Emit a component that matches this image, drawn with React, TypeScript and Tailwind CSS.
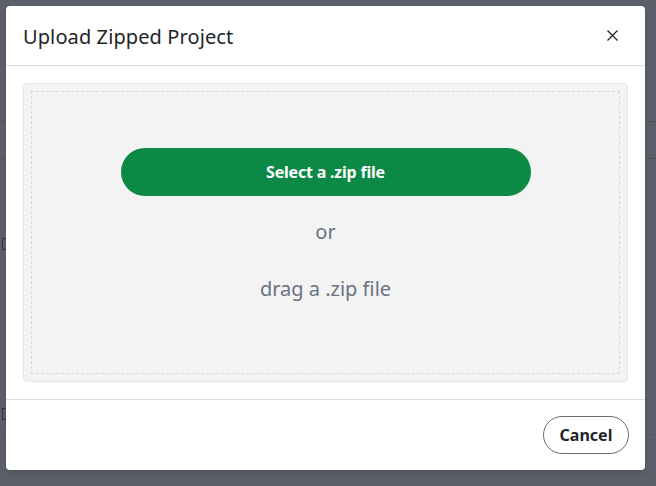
import React from "react";

export default function App() {
  return (
    <div
      className="relative w-[656px] h-[486px] overflow-hidden bg-[#5b5f69]"
      style={{ fontFamily: '"Noto Sans", "Open Sans", sans-serif' }}
    >
      {/* faint underlying page lines */}
      <div className="absolute left-0 top-[121px] w-[656px] h-px bg-[#4f535c]" />
      <div className="absolute left-0 top-[158px] w-[656px] h-px bg-[#4f535c]" />
      <div className="absolute left-0 top-[434px] w-[656px] h-px bg-[#535761]" />
      <div className="absolute left-[2px] top-[238px] w-[4px] h-[12px] border border-r-0 border-[#2f3238]" />
      <div className="absolute left-[2px] top-[408px] w-[4px] h-[12px] border border-r-0 border-[#2f3238]" />

      <div className="absolute left-[6px] top-[6px] w-[639px] h-[464px] bg-white rounded-[4px] flex flex-col shadow-md">
        <div className="h-[60px] flex items-center justify-between pl-[17px] pr-[27px] border-b border-[#dedede] shrink-0">
          <h2 className="text-[20px] text-[#212529] leading-none mt-[2px] tracking-[0.1px]">Upload Zipped Project</h2>
          <svg width="11" height="11" viewBox="0 0 11 11" className="text-[#222]">
            <path d="M0.5 0.5L10.5 10.5M10.5 0.5L0.5 10.5" stroke="currentColor" strokeWidth="1.3" fill="none" />
          </svg>
        </div>
        <div className="flex-1 px-[17px] pt-[17px] pb-[16px]">
          <div className="h-[299px] bg-[#f3f3f3] border border-[#e6e6e6] rounded-[4px] p-[7px]">
            <div className="h-full border border-dashed border-[#dadada] flex flex-col items-center pt-[56px]">
              <button className="w-[410px] h-[48px] rounded-full bg-[#0b8945] text-white font-bold text-[16px] tracking-[-0.2px]">
                Select a .zip file
              </button>
              <div className="mt-[22px] text-[20px] text-[#6b7280] leading-[28px]">or</div>
              <div className="mt-[29px] text-[20px] text-[#6b7280] leading-[28px]">drag a .zip file</div>
            </div>
          </div>
        </div>
        <div className="h-[71px] border-t border-[#dedede] flex items-center justify-end pr-[16px] shrink-0">
          <button className="h-[38px] w-[86px] rounded-full border border-[#6b6b6b] text-[16px] font-bold text-[#212529] bg-white">
            Cancel
          </button>
        </div>
      </div>
    </div>
  );
}
